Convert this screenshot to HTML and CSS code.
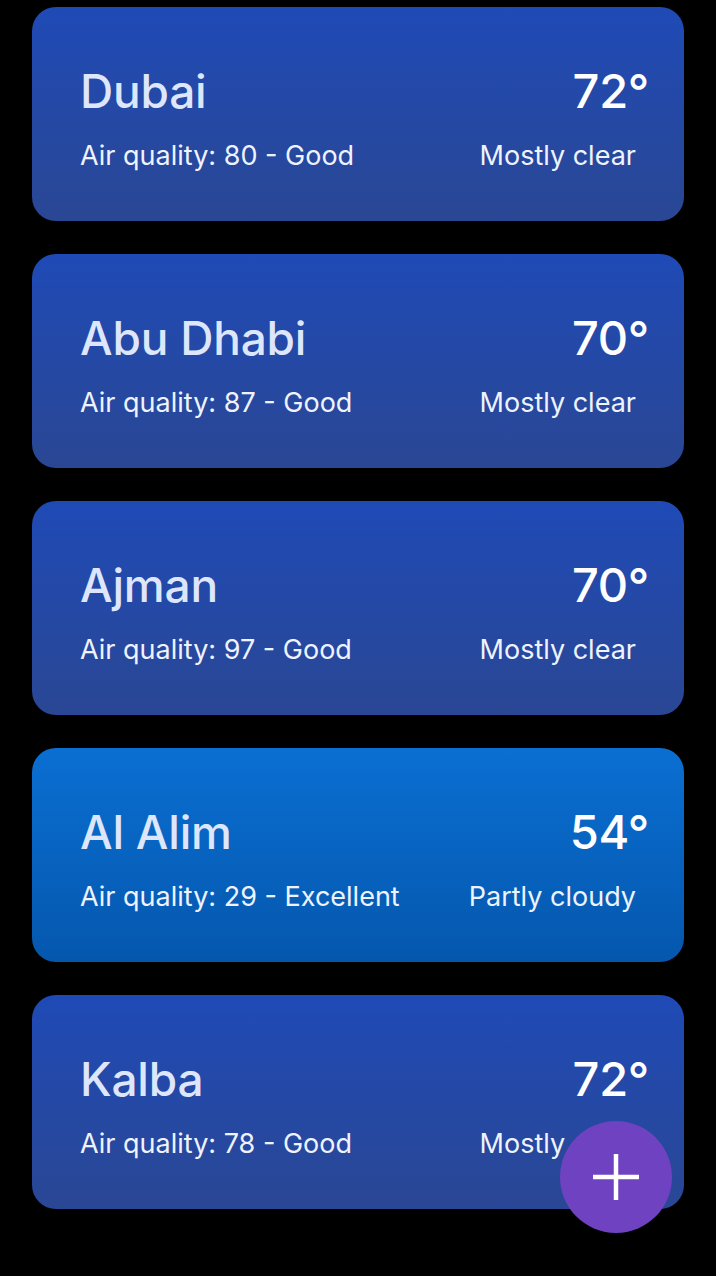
FILE: index.html
```html
<!DOCTYPE html>
<html lang="en">
<head>
<meta charset="utf-8">
<title>Weather</title>
<link rel="stylesheet" href="styles.css">
</head>
<body>
<main class="list">
  <section class="card">
    <div class="row top"><span class="city">Dubai</span><span class="temp">72°</span></div>
    <div class="row sub"><span>Air quality: 80 - Good</span><span class="cond">Mostly clear</span></div>
  </section>
  <section class="card">
    <div class="row top"><span class="city">Abu Dhabi</span><span class="temp">70°</span></div>
    <div class="row sub"><span>Air quality: 87 - Good</span><span class="cond">Mostly clear</span></div>
  </section>
  <section class="card">
    <div class="row top"><span class="city">Ajman</span><span class="temp">70°</span></div>
    <div class="row sub"><span>Air quality: 97 - Good</span><span class="cond">Mostly clear</span></div>
  </section>
  <section class="card card-light">
    <div class="row top"><span class="city">Al Alim</span><span class="temp">54°</span></div>
    <div class="row sub"><span>Air quality: 29 - Excellent</span><span class="cond">Partly cloudy</span></div>
  </section>
  <section class="card">
    <div class="row top"><span class="city">Kalba</span><span class="temp">72°</span></div>
    <div class="row sub"><span>Air quality: 78 - Good</span><span class="cond">Mostly clear</span></div>
  </section>
</main>
<button class="fab" aria-label="Add">
  <svg width="50" height="50" viewBox="0 0 50 50"><path d="M25 2V48M2 25H48" stroke="#fff" stroke-width="4.5" fill="none"/></svg>
</button>
</body>
</html>
```
FILE: styles.css
```css
html, body {
  margin: 0;
  padding: 0;
  background: #000;
  height: 1276px;
  overflow: hidden;
}
body {
  font-family: Inter, "Liberation Sans", sans-serif;
}
.list {
  display: flex;
  flex-direction: column;
  gap: 33px;
  padding: 7px 32px 0 32px;
}
.card {
  height: 214px;
  box-sizing: border-box;
  border-radius: 24px;
  background: linear-gradient(180deg, #1f4ab6 0%, #2a4794 100%);
  padding: 56px 35px 0 48px;
  display: flex;
  flex-direction: column;
}
.card-light {
  background: linear-gradient(180deg, #0a6fd2 0%, #0557ad 100%);
}
.row {
  display: flex;
  justify-content: space-between;
  align-items: baseline;
}
.city {
  font-size: 46px;
  font-weight: 500;
  color: #dde6fb;
  letter-spacing: -0.2px;
  line-height: 56px;
}
.temp {
  font-size: 47px;
  font-weight: 500;
  color: #fff;
  line-height: 56px;
  letter-spacing: -0.3px;
}
.sub {
  margin-top: 20px;
  font-size: 27px;
  color: #eef3ff;
  line-height: 34px;
  padding-right: 13px;
}
.fab {
  position: absolute;
  left: 560px;
  top: 1121px;
  width: 112px;
  height: 112px;
  border-radius: 50%;
  border: none;
  background: #6e42c1;
  display: flex;
  align-items: center;
  justify-content: center;
  padding: 0;
}
```
